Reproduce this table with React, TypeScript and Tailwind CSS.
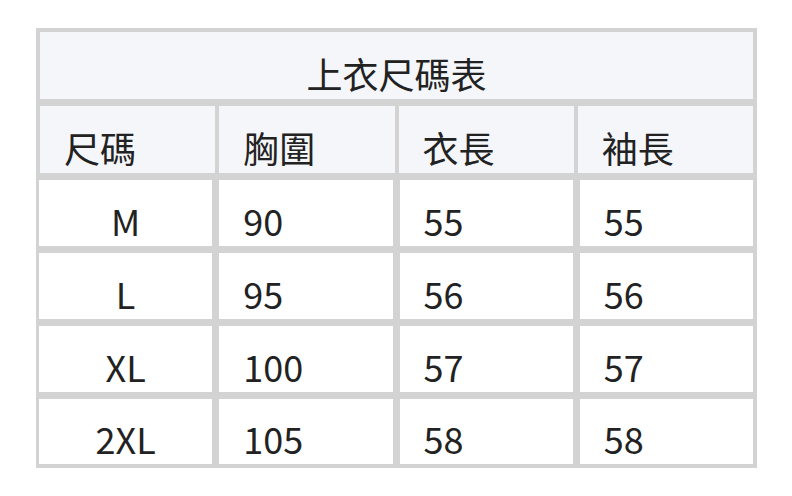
const HEADERS = ["尺碼", "胸圍", "衣長", "袖長"];

const ROWS = [
  ["M", "90", "55", "55"],
  ["L", "95", "56", "56"],
  ["XL", "100", "57", "57"],
  ["2XL", "105", "58", "58"],
];

const font = {
  fontFamily: '"Noto Sans CJK TC", "Noto Sans", sans-serif',
};

export default function App() {
  return (
    <div className="w-[792px] h-[496px] bg-white pt-[28px] pl-[36px]" style={font}>
      <div className="w-[721px] bg-[#d3d3d3] p-[4px] flex flex-col gap-[7px] text-[36px] leading-[52px] text-[#222]">
        {/* title */}
        <div className="h-[67px] bg-[#f5f6fa] flex items-end justify-center">
          上衣尺碼表
        </div>

        {/* header */}
        <div className="h-[67px] grid grid-cols-4 gap-x-[4px]">
          {HEADERS.map((h) => (
            <div key={h} className="bg-[#f5f6fa] flex items-end pl-[24px]">
              {h}
            </div>
          ))}
        </div>

        {/* body rows */}
        {ROWS.map((row, i) => (
          <div
            key={row[0]}
            className={`-ml-px grid grid-cols-4 gap-x-[7px] ${i === ROWS.length - 1 ? "h-[65px]" : "h-[66px]"}`}
          >
            {row.map((cell, j) => (
              <div
                key={j}
                className={`bg-white flex items-end ${j === 0 ? "justify-center" : "pl-[24px]"}`}
              >
                {cell}
              </div>
            ))}
          </div>
        ))}
      </div>
    </div>
  );
}
